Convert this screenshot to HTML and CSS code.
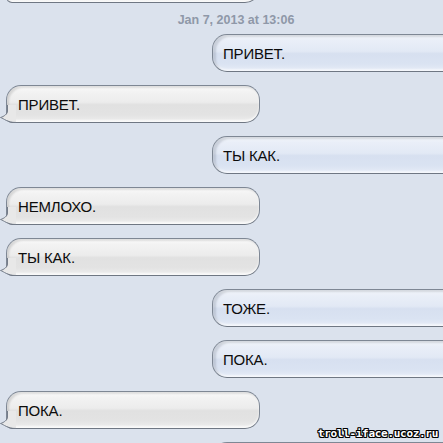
FILE: index.html
```html
<!DOCTYPE html>
<html lang="ru">
<head>
    <meta charset="UTF-8">
    <meta name="viewport" content="width=device-width, initial-scale=1.0">
    <title>Сообщения</title>
    <link rel="stylesheet" href="styles.css">
</head>
<body>
    <div class="thread">
        <div class="msg in first"></div>

        <div class="stamp">Jan 7, 2013 at 13:06</div>

        <div class="msg out">ПРИВЕТ.</div>
        <div class="msg in">ПРИВЕТ.
            <svg class="tail" width="16" height="18" viewBox="0 0 16 18"><path class="fill" d="M8 0 L8 6 C8 9 4 11.5 0.5 12.5 C4 13.5 7 17 16 17 L16 0 Z"/><path class="edge" d="M7.5 0 L7.5 6 C7.5 9 4 11.5 0.5 12.5 C4 13.5 7 17.5 16 17.5"/></svg>
        </div>
        <div class="msg out">ТЫ КАК.</div>
        <div class="msg in">НЕМЛОХО.
            <svg class="tail" width="16" height="18" viewBox="0 0 16 18"><path class="fill" d="M8 0 L8 6 C8 9 4 11.5 0.5 12.5 C4 13.5 7 17 16 17 L16 0 Z"/><path class="edge" d="M7.5 0 L7.5 6 C7.5 9 4 11.5 0.5 12.5 C4 13.5 7 17.5 16 17.5"/></svg>
        </div>
        <div class="msg in">ТЫ КАК.
            <svg class="tail" width="16" height="18" viewBox="0 0 16 18"><path class="fill" d="M8 0 L8 6 C8 9 4 11.5 0.5 12.5 C4 13.5 7 17 16 17 L16 0 Z"/><path class="edge" d="M7.5 0 L7.5 6 C7.5 9 4 11.5 0.5 12.5 C4 13.5 7 17.5 16 17.5"/></svg>
        </div>
        <div class="msg out">ТОЖЕ.</div>
        <div class="msg out">ПОКА.</div>
        <div class="msg in">ПОКА.
            <svg class="tail" width="16" height="18" viewBox="0 0 16 18"><path class="fill" d="M8 0 L8 6 C8 9 4 11.5 0.5 12.5 C4 13.5 7 17 16 17 L16 0 Z"/><path class="edge" d="M7.5 0 L7.5 6 C7.5 9 4 11.5 0.5 12.5 C4 13.5 7 17.5 16 17.5"/></svg>
        </div>
        <div class="msg out"></div>
    </div>

    <div class="watermark">troll-iface.ucoz.ru</div>
</body>
</html>
```

FILE: styles.css
```css
body {
    margin: 0;
    padding: 0;
    width: 443px;
    height: 443px;
    overflow: hidden;
    position: relative;
    background: #dbe2ed;
    font-family: 'Liberation Sans', Arial, sans-serif;
    color: #0c0c0c;
}

.thread {
    width: 472px;
    display: flex;
    flex-direction: column;
}

.msg {
    position: relative;
    box-sizing: border-box;
    width: 254px;
    height: 38px;
    margin-top: 13px;
    padding-left: 11px;
    display: flex;
    align-items: center;
    font-size: 15px;
    letter-spacing: -0.2px;
    border: 1px solid #7e8794;
    border-bottom-color: #6f7783;
    border-radius: 15px;
}

.msg.first {
    margin-top: -35px;
}

.msg.in {
    margin-left: 6px;
    border-bottom-left-radius: 6px;
    background: linear-gradient(to bottom,
        #fefefe 0%,
        #f3f3f3 14%,
        #ececec 45%,
        #e1e1e1 52%,
        #e3e3e3 80%,
        #eeeeee 100%);
    box-shadow: inset 2px 2px 2px rgba(0, 0, 0, 0.12),
                inset 0 -2px 2px rgba(255, 255, 255, 0.7);
}

.msg.out {
    margin-left: 212px;
    padding-left: 10px;
    background: linear-gradient(to bottom,
        #f7f9fd 0%,
        #eaeff8 14%,
        #e2e9f5 45%,
        #d7e0f0 52%,
        #dae3f2 80%,
        #e6ecf7 100%);
    box-shadow: inset 3px 2px 2px rgba(60, 70, 90, 0.18),
                inset 0 -2px 2px rgba(255, 255, 255, 0.6);
}

.tail {
    position: absolute;
    left: -7px;
    bottom: -1px;
}

.tail .fill {
    fill: #e8e8e8;
}

.tail .edge {
    fill: none;
    stroke: #747c89;
    stroke-width: 1;
}

.stamp {
    height: 31px;
    padding-top: 9px;
    box-sizing: border-box;
    text-align: center;
    font-size: 12.5px;
    font-weight: bold;
    line-height: 16px;
    color: #8f98a8;
}

.stamp + .msg {
    margin-top: 0;
}

.watermark {
    position: absolute;
    right: 5px;
    bottom: 3px;
    font-family: 'DejaVu Sans Mono', monospace;
    font-size: 11px;
    font-weight: bold;
    color: #fff;
    letter-spacing: -0.3px;
    text-shadow: -1px -1px 0 #000, 1px -1px 0 #000, -1px 1px 0 #000, 1px 1px 0 #000,
                 0 1px 0 #000, 0 -1px 0 #000, 1px 0 0 #000, -1px 0 0 #000;
}
```
